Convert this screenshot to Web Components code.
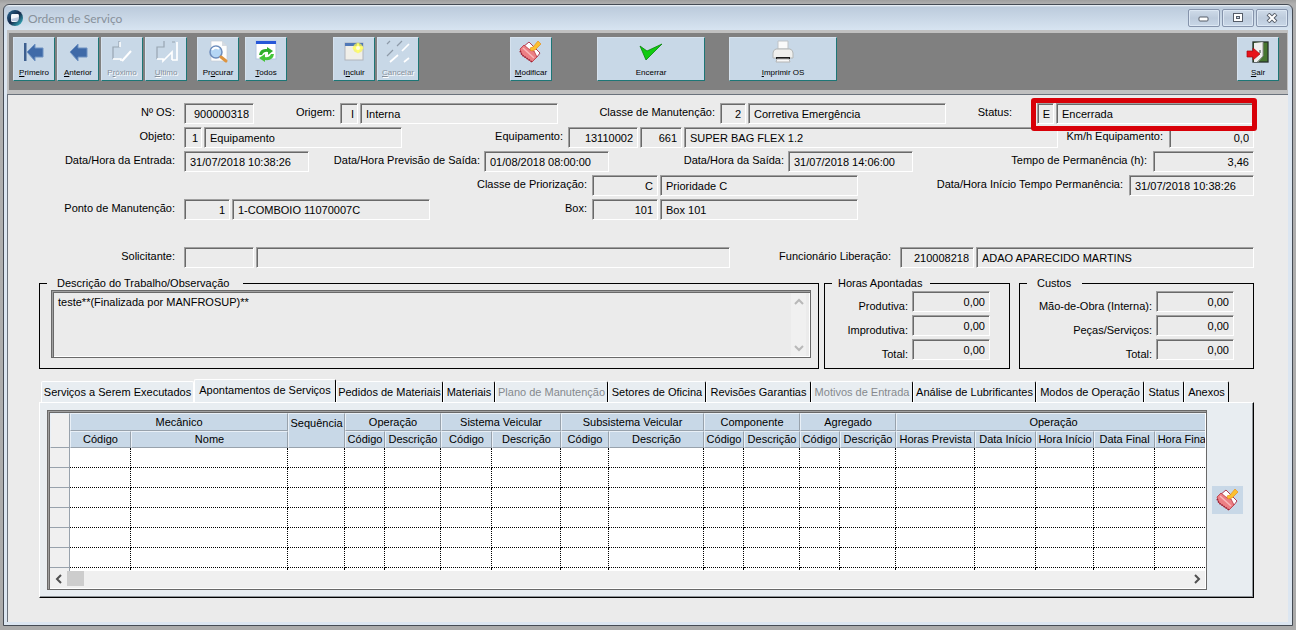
<!DOCTYPE html>
<html lang="pt-BR">
<head>
<meta charset="utf-8">
<title>Ordem de Serviço</title>
<style>
html,body{margin:0;background:#ababab}
body{font:11px/14px "Liberation Sans",Arial,sans-serif;color:#000}
</style>
</head>
<body>
<os-window heading="Ordem de Serviço">
  <os-toolbar slot="toolbar"></os-toolbar>
  <os-form></os-form>
  <os-summary></os-summary>
  <os-tabs></os-tabs>
</os-window>
<script>
const ICONS = {
  primeiro: `<rect x="2" y="3" width="2.500" height="18" fill="#3d5f8f"/><path d="M5 12 L13 4 V8 H21 V17 H13 V21Z" fill="#3f6aa8" stroke="#6f92c2"/>`,
  anterior: `<path d="M4 12 L12 4 V8 H21 V17 H12 V21Z" fill="#3f6aa8" stroke="#6f92c2"/>`,
  proximo: `<path d="M3 19 V7 H9 V1" fill="none" stroke="#98a5b2" stroke-width="1.200"/><path d="M3 19 H11 V21 M10 2 V7" fill="none" stroke="#fff" stroke-width="1.500"/><path d="M12 21 L21 11" stroke="#fff" stroke-width="2"/>`,
  ultimo: `<path d="M3 19 V7 H10 V1 M18 2 H21" fill="none" stroke="#98a5b2" stroke-width="1.200"/><path d="M3 19 H9 V21 L18 12 V20 M23 2 V20 H18" fill="none" stroke="#fff" stroke-width="1.700"/>`,
  procurar: `<path d="M5 1 H16 L21 6 V21 H5Z" fill="#fdfdfd" stroke="#c4ccd4" stroke-width=".7"/><path d="M16 1 V6 H21Z" fill="#d5dbe2"/><circle cx="10" cy="12" r="6" fill="#b4d6f5" stroke="#6d8cbb" stroke-width="1.500"/><path d="M6 10 Q9 6 13 9" stroke="#fff" fill="none" stroke-width="2"/><path d="M15 17 L20 21" stroke="#dd9440" stroke-width="3" stroke-linecap="round"/>`,
  todos: `<rect x="2" y="1" width="20" height="18" fill="#fff" stroke="#b5c6e4"/><rect x="2" y="1" width="20" height="3" fill="#2758d8"/><path d="M5 15 Q6 8 13 9 V7 L19 11 L14 15 V12 Q10 11 8 15Z" fill="#2fae2b"/><path d="M20 14 Q19 21 11 20 V22 L5 18 L11 14 V17 Q15 18 17 14Z" fill="#45c53a"/>`,
  incluir: `<rect x="3" y="3" width="18" height="17" fill="#f0efe9" stroke="#b0b4bc"/><rect x="3" y="3" width="18" height="3" fill="#4f78b8"/><circle cx="16" cy="8" r="5" fill="#f7f35a" opacity=".75"/><path d="M16 2 L17.500 6 L22 8 L17.500 10 L16 14 L14.500 10 L10 8 L14.500 6Z" fill="#ffff6a"/><circle cx="16" cy="8" r="2" fill="#fffde0"/>`,
  cancelar: `<path d="M1 4 L4 1 M11 6 L16 1 M1 16 L7 10" stroke="#8d9aa8" stroke-width="1.200"/><path d="M16 11 L23 4 M4 22 L12 15 M18 22 L23 18" stroke="#fff" stroke-width="1.700"/>`,
  modificar: `<path d="M4 7 L10 2 L21 13 L18 17 L9 13Z" fill="#fff" stroke="#b03a50"/><path d="M1 9 L5 5 L11 10 L15 11 L18 17 L13 22 L3 15Z" fill="#ec7f84" stroke="#b8323f" stroke-width=".8"/><path d="M4 8 L15 18" stroke="#f9b8ba" stroke-width="1.500"/><path d="M1 11 L3 15 L13 22" fill="none" stroke="#9b2438" stroke-width="1.500" stroke-dasharray="1.500 1"/><path d="M11 8 L14 7 L19 1 L22 4 L16 10 L12 11Z" fill="#fcc02f" stroke="#e58f20" stroke-width=".7"/>`,
  encerrar: `<path d="M1 6 L8 11 L23 4 L7 20Z" fill="#10cb10" stroke="#078507" stroke-width=".8" stroke-linejoin="round"/>`,
  imprimir: `<path d="M7 1 H17 V9 H7Z" fill="#fafafa" stroke="#bfc3c6"/><path d="M5 9 H19 Q22 10 22 13 V18 H2 V13 Q2 10 5 9Z" fill="#f0f0ee" stroke="#b3b6b6"/><path d="M5 17 H19 V19 H5Z" fill="#1c1c1c"/><path d="M6 19 H18 L19 22 H5Z" fill="#f8f8f8" stroke="#b5b5b5"/>`,
  sair: `<rect x="7" y="2" width="15" height="20" fill="#46752f" stroke="#26302a" stroke-width="1.300"/><path d="M8 3 L17 2 V16 L11 22 H8Z" fill="#efefef"/><path d="M17 2 V16 L12 22" fill="none" stroke="#8c8c8c"/><path d="M14 10 v3" stroke="#333"/><path d="M1 11 H7 V8 L14 14 L7 20 V17 H1Z" fill="#e8121a" stroke="#a50a10" stroke-width=".7"/>`
};
const svg = (name) => `<svg viewBox="0 0 24 24" width="24" height="24" aria-hidden="true">${ICONS[name]}</svg>`;

class OsElement extends HTMLElement {
  connectedCallback() {
    if (this.shadowRoot) return;
    this.attachShadow({mode: "open"}).innerHTML = this.render();
  }
}

customElements.define("os-window", class extends OsElement {
  render() {
    return `<style>
      :host{display:flex;min-height:100vh;box-sizing:border-box;padding:4px 3px;background:linear-gradient(#9f9f9f,#b0b0b0 4px,#ababab)}
      .frame{flex:1;min-width:0;display:flex;flex-direction:column;border:1px solid #454b54;border-radius:6px 6px 0 0;padding:0 4px 3px 3px;background:linear-gradient(#f4f8fc,#bccbdc 2px,#d7e4f1 25px,#dce6f1 40px)}
      header{height:25px;display:flex;align-items:center;gap:5px}
      h1{flex:1;margin:0;font:12px/16px Lato,"Open Sans",sans-serif;color:#88919b;padding-top:2px}
      .ctl{display:flex;gap:2px;align-self:flex-end;margin-bottom:3px}
      .ctl button{width:32px;height:18px;box-sizing:border-box;padding:0;border:1px solid #8593ab;border-radius:2px;background:linear-gradient(#cfdbe9,#bdcbdc 50%,#c9d7e7);display:flex;align-items:center;justify-content:center;box-shadow:inset 0 0 0 1px #dce7f3}
      .bar{border:solid #c0c0c0;border-width:3px 1px 4px 2px}
      main{flex:1;border:solid #6a727c;border-width:1px 0 0 1px;background:#ebebeb;padding:8px 34px 23px 31px}
    </style>
    <div class="frame">
      <header>
        <svg width="16" height="16" viewBox="0 0 16 16" aria-hidden="true"><defs><linearGradient id="g" x1="0" y1="0" x2="1" y2="1"><stop offset="0" stop-color="#2a6c96"/><stop offset=".5" stop-color="#14284a"/><stop offset="1" stop-color="#3fd0da"/></linearGradient></defs><circle cx="8" cy="8" r="8" fill="url(#g)"/><path d="M5 4 H11 Q12 4 12 6 L11 11 Q10 12 8 12 H5 Q4 12 4 10 V6 Q4 4 5 4Z" fill="#f2f5fb"/><path d="M4 9 L12 7 L11 11 H5Z" fill="#bcc8e0"/></svg>
        <h1>${this.getAttribute("heading")}</h1>
        <div class="ctl">
          <button aria-label="Minimizar"><svg width="12" height="10"><rect x="1" y="4" width="9" height="4" rx="1" fill="#fff" stroke="#555c68"/></svg></button>
          <button aria-label="Restaurar"><svg width="12" height="10"><rect x="1.500" y=".5" width="9" height="8" fill="#fff" stroke="#555c68"/><rect x="4.500" y="3.500" width="3" height="2" fill="#c9d5e4" stroke="#555c68"/></svg></button>
          <button aria-label="Fechar"><svg width="12" height="10"><path d="M2 1 L10 9 M10 1 L2 9" stroke="#555c68" stroke-width="4"/><path d="M2.500 1.500 L9.500 8.500 M9.500 1.500 L2.500 8.500" stroke="#fff" stroke-width="2"/></svg></button>
        </div>
      </header>
      <div class="bar"><slot name="toolbar"></slot></div>
      <main><slot></slot></main>
    </div>`;
  }
});

customElements.define("os-tool", class extends OsElement {
  render() {
    const off = this.hasAttribute("disabled");
    return `<style>
      :host{display:block;width:42px;flex:none}
      button{width:100%;height:44px;box-sizing:border-box;margin:0;padding:2px 0 0;border:1px solid;border-color:#d6e2ee #1d7676 #1d7676 #d6e2ee;background:#c8d8e7;display:flex;flex-direction:column;align-items:center;gap:3px;font:8px/12px "Liberation Sans",Arial,sans-serif;color:${off ? "#87919c" : "#000"};white-space:nowrap;${off ? "text-shadow:1px 1px #fff;" : ""}}
      svg{display:block;flex:none}
    </style><button ${off ? "disabled" : ""}>${svg(this.getAttribute("icon"))}<span><slot></slot></span></button>`;
  }
});

customElements.define("os-toolbar", class extends OsElement {
  render() {
    return `<style>
      :host{display:flex;justify-content:space-between;background:#808080;padding:4px 8px 9px 4px}
      .set,.group{display:flex}
      .group{gap:2px}
      .wide{width:108px}
      .find{margin-left:10px}.all{margin-left:6px}.new{margin-left:46px}.edit{margin-left:91px}.end{margin-left:45px}.print{margin-left:24px}
    </style>
    <div class="set">
      <div class="group">
        <os-tool icon="primeiro"><u>P</u>rimeiro</os-tool><os-tool icon="anterior"><u>A</u>nterior</os-tool>
        <os-tool icon="proximo" disabled>P<u>r</u>óximo</os-tool><os-tool icon="ultimo" disabled><u>U</u>ltimo</os-tool>
      </div>
      <os-tool class="find" icon="procurar">Pr<u>o</u>curar</os-tool>
      <os-tool class="all" icon="todos"><u>T</u>odos</os-tool>
      <div class="group new"><os-tool icon="incluir">I<u>n</u>cluir</os-tool><os-tool icon="cancelar" disabled><u>C</u>ancelar</os-tool></div>
      <os-tool class="edit" icon="modificar"><u>M</u>odificar</os-tool>
      <os-tool class="wide end" icon="encerrar">Encerrar</os-tool>
      <os-tool class="wide print" icon="imprimir"><u>I</u>mprimir OS</os-tool>
    </div>
    <os-tool icon="sair"><u>S</u>air</os-tool>`;
  }
});

const INPUT_CSS = `
  input{font:inherit;color:inherit;height:21px;box-sizing:border-box;margin:0;border:1px solid;border-color:#a0a0a0 #fff #fff #a0a0a0;box-shadow:inset 1px 1px #696969;border-radius:0;background:#ebebeb;padding:1px 4px 0 5px;min-width:0;outline:0}
  input.num{text-align:right}`;

/* Each group: [label, label width, gap before the boxes, boxes]; a box is [width, value, right-aligned]. */
const ROWS = [
  [["Nº OS:",145,9,[[70,"900000318",1]]],["Origem:",86,5,[[18,"I",1],[198,"Interna"]]],["Classe de Manutenção:",162,5,[[26,"2",1],[198,"Corretiva Emergência"]]],["Status:",91,25,[[17,"E",1],[198,"Encerrada"]],"mark"]],
  [["Objeto:",145,9,[[18,"1",1],[198,"Equipamento"]]],["Equipamento:",166,5,[[70,"13110002",1],[42,"661",1],[374,"SUPER BAG FLEX 1.2"]]],["Km/h Equipamento:",111,6,[[85,"0,0",1]]]],
  [["Data/Hora da Entrada:",145,9,[[125,"31/07/2018 10:38:26"]]],["Data/Hora Previsão de Saída:",175,4,[[125,"01/08/2018 08:00:00"]]],["Data/Hora da Saída:",179,4,[[125,"31/07/2018 14:06:00"]]],["Tempo de Permanência (h):",240,6,[[101,"3,46",1]]]],
  [["Classe de Priorização:",553,5,[[66,"C",1],[198,"Prioridade C"]]],["Data/Hora Início Tempo Permanência:",271,6,[[125,"31/07/2018 10:38:26"]]]],
  [["Ponto de Manutenção:",145,9,[[46,"1",1],[198,"1-COMBOIO 11070007C"]]],["Box:",162,5,[[66,"101",1],[198,"Box 101"]]],["",396,0,[]]],
  [["Solicitante:",145,9,[[70,"",1],[474,""]]],["Funcionário Liberação:",170,9,[[74,"210008218",1],[278,"ADAO APARECIDO MARTINS"]]]]
];

customElements.define("os-form", class extends OsElement {
  render() {
    const rows = ROWS.map((row, r) => `<div class="row">${row.map(([label, w, gap, boxes, mark], g) => {
      const id = `f${r}${g}`;
      const inputs = boxes.map(([bw, v, num], i) =>
        `<input readonly ${i ? `aria-label="${label}"` : `id="${id}"`} class="${num ? "num" : ""}${bw < 20 ? " tiny" : ""}" style="flex:${num ? 0 : 1} 1 ${bw}px" value="${v}">`).join("");
      const tag = label ? `<label for="${id}" style="flex:${g ? 1 : 0} 0 ${w}px;padding-right:${gap}px">${label}</label>` : `<span style="flex:1 1 ${w}px"></span>`;
      return tag + (inputs ? `<span class="boxes ${mark || ""}" style="flex:0 1 ${boxes.reduce((s, b) => s + b[0] + 2, -2)}px">${inputs}</span>` : "");
    }).join("")}</div>`).join("");
    return `<style>
      :host{display:flex;flex-direction:column;gap:3px}
      .row{display:flex}
      .row:last-child{margin-top:24px}
      label{box-sizing:border-box;text-align:right;white-space:nowrap;line-height:18px}
      .boxes{display:flex;gap:2px;min-width:0}
      .mark{position:relative}
      .mark::after{content:"";position:absolute;top:-5px;bottom:-7px;left:-6px;right:-3px;border:5px solid #d80008;border-radius:3px;z-index:1;pointer-events:none}
      ${INPUT_CSS}
      input.tiny{padding-left:2px;padding-right:3px}
    </style>${rows}`;
  }
});

customElements.define("os-totals", class extends OsElement {
  render() {
    const lines = this.getAttribute("lines").split("|");
    return `<style>
      :host{display:block;flex:none}
      fieldset{height:93px;box-sizing:border-box;margin:0;border:1px solid #000;padding:1px 19px 8px 0;display:grid;grid-template-columns:1fr 78px;gap:3px 4px}
      legend{margin-left:7px;padding:0 ${this.getAttribute("pad")};line-height:14px}
      label{text-align:right;line-height:21px;padding-top:5px;height:16px;white-space:nowrap}
      ${INPUT_CSS}
      input{width:78px}
    </style><fieldset><legend>${this.getAttribute("heading")}</legend>${lines.map((l, i) => `<label for="t${i}">${l}</label><input id="t${i}" class="num" readonly value="0,00">`).join("")}</fieldset>`;
  }
});

customElements.define("os-summary", class extends OsElement {
  render() {
    return `<style>
      :host{display:flex;margin-top:8px}
      fieldset{flex:1;min-width:0;height:93px;box-sizing:border-box;margin:0 5px 0 0;border:1px solid #000;padding:0 7px 10px 11px}
      legend{margin-left:-4px;padding:0 14px 0 10px;line-height:14px}
      .memo{display:flex;height:68px;box-sizing:border-box;border:1px solid #696969;box-shadow:inset 1px 1px #a0a0a0,inset 2px 2px #696969,inset -1px -1px #fff;padding:2px 1px 1px 2px}
      textarea{flex:1;resize:none;border:0;background:none;font:inherit;color:inherit;padding:2px 4px;outline:0;overflow:hidden}
      .scroll{width:15px;margin-right:3px;background:#f0f0f0;display:flex;flex-direction:column;justify-content:space-between;align-items:center;padding:5px 0 4px;box-sizing:border-box}
      .hours{width:186px;margin-right:9px}
      .costs{width:235px}
    </style>
    <fieldset><legend>Descrição do Trabalho/Observação</legend>
      <div class="memo"><textarea readonly aria-label="Descrição do Trabalho/Observação">teste**(Finalizada por MANFROSUP)**</textarea>
      <div class="scroll"><svg width="10" height="8"><path d="M1 6 L5 2 L9 6" fill="none" stroke="#b8b8b8" stroke-width="2"/></svg><svg width="10" height="8"><path d="M1 2 L5 6 L9 2" fill="none" stroke="#b8b8b8" stroke-width="2"/></svg></div></div>
    </fieldset>
    <os-totals class="hours" heading="Horas Apontadas" pad="8px 0 6px" lines="Produtiva:|Improdutiva:|Total:"></os-totals>
    <os-totals class="costs" heading="Custos" pad="11px 0 10px" lines="Mão-de-Obra (Interna):|Peças/Serviços:|Total:"></os-totals>`;
  }
});

customElements.define("os-grid", class extends OsElement {
  render() {
    const cols = [20,61,157,57,40,56,51,69,48,95,40,56,40,56,79,61,58,61,56];
    const groups = [["Mecânico",2],["Sequência",0],["Operação",2],["Sistema Veicular",2],["Subsistema Veicular",2],["Componente",2],["Agregado",2],["Operação",5]];
    const names = ["Código","Nome","Código","Descrição","Código","Descrição","Código","Descrição","Código","Descrição","Código","Descrição","Horas Prevista","Data Início","Hora Início","Data Final","Hora Final"];
    return `<style>
      :host{display:block;box-sizing:border-box;border:1px solid #696969;box-shadow:inset 1px 1px #a0a0a0,inset 2px 2px #696969,inset -1px -1px #fff;padding:2px 1px 1px 2px;min-width:0}
      .view{height:158px;overflow:hidden;background:#fff}
      table{table-layout:fixed;border-collapse:separate;border-spacing:0;width:1161px}
      th,td{box-sizing:border-box;padding:0;overflow:hidden}
      thead th{font-weight:normal;background:#c8d8e7;border:1px solid;border-color:#e9f0f7 #98a2ac #98a2ac #e9f0f7;white-space:nowrap;line-height:14px;padding-bottom:1px}
      thead tr:first-child th{height:18px}
      thead tr:last-child th{height:17px;line-height:13px}
      thead th.seq{vertical-align:top;padding-top:2px}
      thead th.corner{background:#f0f0f0}
      tbody td{height:20px;border:1px dotted #000;border-width:0 1px 1px 0}
      tbody th{height:20px;background:#f0f0f0;border:1px solid #98a2ac;border-width:0 1px 1px 0}
      .scroll{height:17px;background:#f0f0f0;display:flex;align-items:flex-start}
      .thumb{width:17px;height:15px;background:#cdcdcd}
      .left,.right{width:17px;height:15px;display:grid;place-items:center}
      .right{margin-left:auto}
    </style>
    <div class="view"><table>
      <colgroup>${cols.map(w => `<col style="width:${w}px">`).join("")}</colgroup>
      <thead><tr><th class="corner" rowspan="2"></th>${groups.map(([t, n]) => n ? `<th colspan="${n}">${t}</th>` : `<th class="seq" rowspan="2">${t}</th>`).join("")}</tr>
      <tr>${names.map(n => `<th>${n}</th>`).join("")}</tr></thead>
      <tbody>${(`<tr><th></th>${"<td></td>".repeat(18)}</tr>`).repeat(7)}</tbody>
    </table></div>
    <div class="scroll"><span class="left"><svg width="8" height="10"><path d="M6 1 L2 5 L6 9" fill="none" stroke="#505050" stroke-width="2"/></svg></span><span class="thumb"></span><span class="right"><svg width="8" height="10"><path d="M2 1 L6 5 L2 9" fill="none" stroke="#505050" stroke-width="2"/></svg></span></div>`;
  }
});

customElements.define("os-tabs", class extends OsElement {
  render() {
    const tabs = [["Serviços a Serem Executados",153],["Apontamentos de Serviços",142,"on"],["Pedidos de Materiais",107],["Materiais",52],["Plano de Manutenção",113,"off"],["Setores de Oficina",98],["Revisões Garantias",105],["Motivos de Entrada",102,"off"],["Análise de Lubrificantes",123],["Modos de Operação",108],["Status",40],["Anexos",45]];
    return `<style>
      :host{display:block;margin-top:10px}
      [role=tablist]{display:flex;align-items:flex-end;padding-left:2px}
      [role=tab]{flex:none;height:21px;box-sizing:border-box;margin:0;padding:0;border:solid;border-width:1px 1px 0 1px;border-color:#fff #000 #fff #fff;border-radius:2px 2px 0 0;background:#e8edf1;font:inherit;color:#000;white-space:nowrap;display:flex;justify-content:center;align-items:center}
      [role=tab]:first-child{border-right-color:#fff}
      [role=tab].on{height:23px;padding-bottom:3px}
      [role=tab].off{color:#85898d}
      .panel{display:flex;align-items:center;gap:5px;background:#e8edf1;border:1px solid;border-color:#fff #000 #000 #fff;box-shadow:inset -1px -1px #8f9499;padding:7px 10px 7px 7px}
      os-grid{flex:1}
      .edit{flex:none;width:31px;height:28px;border:0;padding:0;background:#c8d8e7;display:grid;place-items:center}
    </style>
    <div role="tablist">${tabs.map(([t, w, c = ""]) => `<button role="tab" class="${c}" ${c === "off" ? "disabled" : ""} aria-selected="${c === "on"}" style="width:${w}px">${t}</button>`).join("")}</div>
    <div class="panel" role="tabpanel"><os-grid></os-grid><button class="edit" aria-label="Modificar">${svg("modificar")}</button></div>`;
  }
});
</script>
</body>
</html>
